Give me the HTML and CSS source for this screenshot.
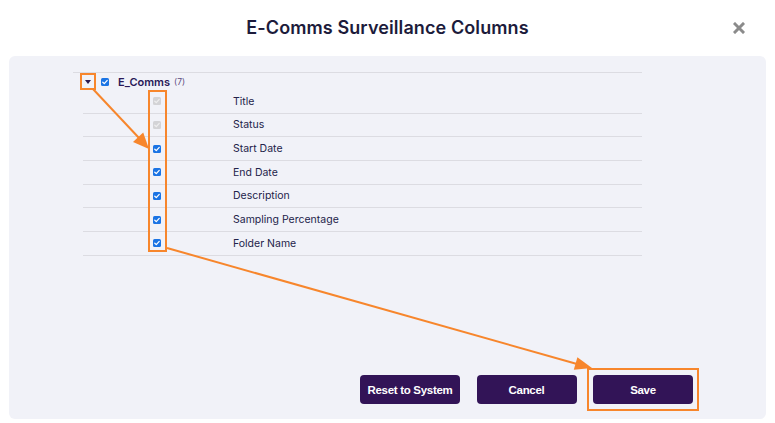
FILE: index.html
```html
<!DOCTYPE html>
<html lang="en">
<head>
<meta charset="utf-8">
<title>E-Comms Surveillance Columns</title>
<link rel="stylesheet" href="styles.css">
</head>
<body>
<div class="dialog">
  <header class="head">
    <span></span>
    <h1 class="title">E-Comms Surveillance Columns</h1>
    <button class="close" aria-label="Close">
      <svg width="12" height="12" viewBox="0 0 12 12"><path d="M2 2 L10 10 M10 2 L2 10" stroke="#8b8b8b" stroke-width="3" stroke-linecap="square"/></svg>
    </button>
  </header>
  <section class="panel">
    <div class="tree">
      <div class="group">
        <span class="caret"></span>
        <span class="cb on"><svg viewBox="0 0 9 9"><path d="M2 4.7 L3.7 6.3 L7 2.7"/></svg></span>
        <span class="gname">E_Comms</span>
        <span class="count">(7)</span>
      </div>
      <ul class="cols">
        <li class="row"><span class="cb dis"><svg viewBox="0 0 9 9"><path d="M2 4.7 L3.7 6.3 L7 2.7"/></svg></span><span class="label">Title</span></li>
        <li class="row"><span class="cb dis"><svg viewBox="0 0 9 9"><path d="M2 4.7 L3.7 6.3 L7 2.7"/></svg></span><span class="label">Status</span></li>
        <li class="row"><span class="cb on"><svg viewBox="0 0 9 9"><path d="M2 4.7 L3.7 6.3 L7 2.7"/></svg></span><span class="label">Start Date</span></li>
        <li class="row"><span class="cb on"><svg viewBox="0 0 9 9"><path d="M2 4.7 L3.7 6.3 L7 2.7"/></svg></span><span class="label">End Date</span></li>
        <li class="row"><span class="cb on"><svg viewBox="0 0 9 9"><path d="M2 4.7 L3.7 6.3 L7 2.7"/></svg></span><span class="label">Description</span></li>
        <li class="row"><span class="cb on"><svg viewBox="0 0 9 9"><path d="M2 4.7 L3.7 6.3 L7 2.7"/></svg></span><span class="label">Sampling Percentage</span></li>
        <li class="row"><span class="cb on"><svg viewBox="0 0 9 9"><path d="M2 4.7 L3.7 6.3 L7 2.7"/></svg></span><span class="label">Folder Name</span></li>
      </ul>
    </div>
    <div class="actions">
      <button class="btn">Reset to System</button>
      <button class="btn">Cancel</button>
      <button class="btn">Save</button>
    </div>
  </section>
  <svg class="notes" width="775" height="423" viewBox="0 0 775 423">
    <g fill="none" stroke="#f7862c" stroke-width="2">
      <rect x="81" y="74" width="14" height="15"/>
      <rect x="149" y="91" width="17" height="160"/>
      <rect x="588" y="369" width="110" height="41"/>
      <line x1="93" y1="89" x2="139" y2="138"/>
      <line x1="167" y1="248" x2="577" y2="364"/>
    </g>
    <g fill="#f7862c">
      <polygon points="149,149 133,142.1 143.2,132.5"/>
      <polygon points="592,368 573.8,369.8 577.4,357.3"/>
    </g>
  </svg>
</div>
</body>
</html>
```
FILE: styles.css
```css
* { box-sizing: border-box; }
html, body { margin: 0; padding: 0; background: #ffffff; }
body { font-family: Inter, "Noto Sans", sans-serif; width: 775px; height: 423px; overflow: hidden; }

.dialog { position: relative; width: 775px; height: 423px; display: flex; flex-direction: column; }

.head {
  height: 56px;
  display: grid;
  grid-template-columns: 1fr auto 1fr;
  align-items: center;
}
.title {
  margin: 0;
  font-size: 18px;
  font-weight: 600;
  color: #1c1b3b;
  letter-spacing: 0.1px;
  line-height: 56px;
}
.close {
  justify-self: end;
  margin-right: 29px;
  padding: 0;
  border: 0;
  background: none;
  width: 14px;
  height: 14px;
  display: flex;
  align-items: center;
  justify-content: center;
}

.panel {
  margin: 0 9px 4px;
  flex: 1;
  background: #f1f2f8;
  border-radius: 6px;
  padding: 16px 73px 15px 64px;
  display: flex;
  flex-direction: column;
}

.tree { width: 569px; border-top: 1px solid #dcdce2; }
.group {
  height: 17px;
  display: flex;
  align-items: center;
  padding-left: 12px;
}
.caret {
  width: 0; height: 0;
  border-left: 3.5px solid transparent;
  border-right: 3.5px solid transparent;
  border-top: 4px solid #2b1950;
  margin-right: 10px;
}
.gname {
  margin-left: 9px;
  font-size: 11px;
  font-weight: 600;
  color: #2a1a58;
}
.count {
  margin-left: 4px;
  font-size: 8.5px;
  color: #5b4a7e;
}

.cols { list-style: none; margin: 0 0 0 10px; padding: 0; }
.row {
  height: 23.67px;
  border-bottom: 1px solid #dcdce2;
  display: flex;
  align-items: center;
  padding-left: 70px;
}
.label {
  margin-left: 72px;
  font-size: 10.5px;
  color: #23224a;
}

.cb {
  width: 8px; height: 8px;
  border-radius: 1.5px;
  display: inline-flex;
  flex-shrink: 0;
}
.cb svg { width: 8px; height: 8px; }
.cb path { fill: none; stroke-width: 1.4; stroke-linecap: round; stroke-linejoin: round; }
.cb.on { background: #1b74e4; }
.cb.on path { stroke: #ffffff; }
.cb.dis { background: #d3d3d6; }
.cb.dis path { stroke: #eeeeef; }

.actions {
  margin-top: auto;
  display: flex;
  justify-content: flex-end;
  gap: 16.5px;
}
.btn {
  width: 100px;
  height: 29px;
  border: 0;
  border-radius: 4px;
  background: #321457;
  color: #ffffff;
  font-family: "Liberation Sans", Arial, sans-serif;
  font-size: 11.5px;
  font-weight: 700;
  letter-spacing: -0.3px;
}

.notes { position: absolute; left: 0; top: 0; pointer-events: none; }
```
